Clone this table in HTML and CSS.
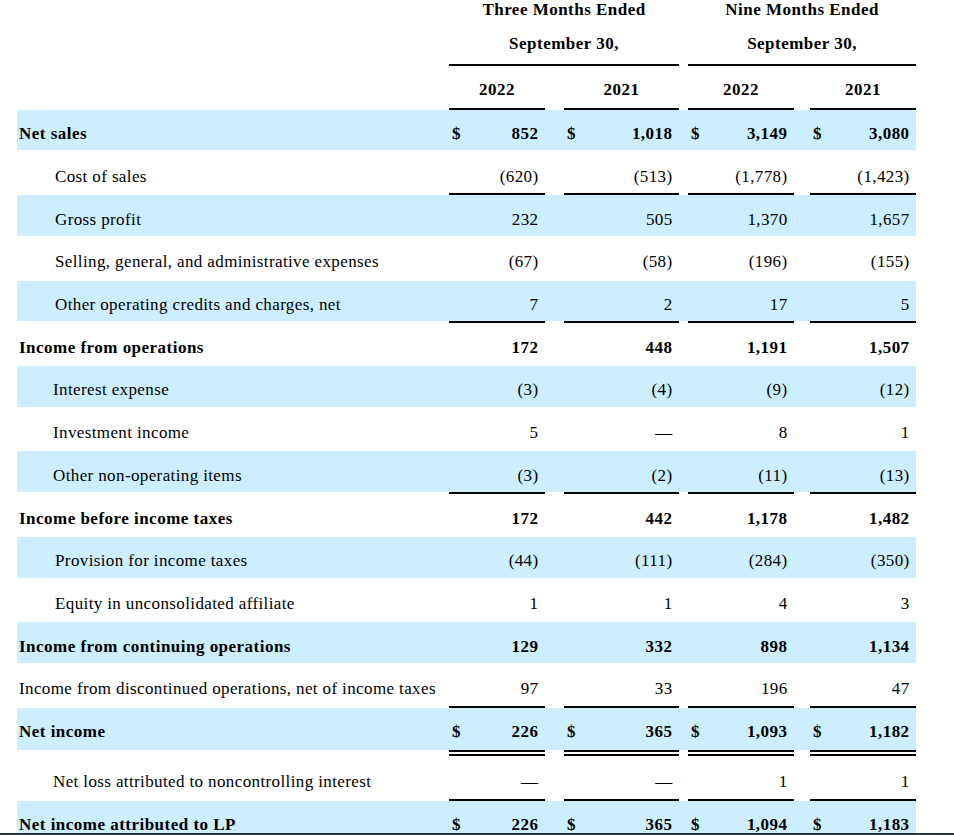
FILE: index.html
```html
<!DOCTYPE html>
<html lang="en">
<head>
<meta charset="utf-8">
<title>Statement of Income</title>
<link rel="stylesheet" href="styles.css">
</head>
<body>
<div class="wrap">
<table class="fin">
  <colgroup>
    <col class="c-lbl">
    <col class="c-d"><col class="c-n1"><col class="c-s1">
    <col class="c-d"><col class="c-n2"><col class="c-s2">
    <col class="c-d"><col class="c-n3"><col class="c-s3">
    <col class="c-d"><col class="c-n4">
  </colgroup>
  <tbody>
    <tr class="h1">
      <td></td>
      <td class="hc" colspan="5">Three Months Ended</td>
      <td></td>
      <td class="hc" colspan="5">Nine Months Ended</td>
    </tr>
    <tr class="h2">
      <td></td>
      <td class="hc" colspan="5">September 30,</td>
      <td></td>
      <td class="hc" colspan="5">September 30,</td>
    </tr>
    <tr class="h3">
      <td></td>
      <td class="hc ul" colspan="2">2022</td>
      <td class="ul"></td>
      <td class="hc ul" colspan="2">2021</td>
      <td></td>
      <td class="hc ul" colspan="2">2022</td>
      <td class="ul"></td>
      <td class="hc ul" colspan="2">2021</td>
    </tr>

    <tr class="blue t b">
      <td class="lbl">Net sales</td>
      <td class="d">$</td><td class="n">852</td><td></td>
      <td class="d">$</td><td class="n">1,018</td><td></td>
      <td class="d">$</td><td class="n">3,149</td><td></td>
      <td class="d">$</td><td class="n">3,080</td>
    </tr>
    <tr>
      <td class="in1">Cost of sales</td>
      <td class="d"></td><td class="n">(620)</td><td></td>
      <td class="d"></td><td class="n">(513)</td><td></td>
      <td class="d"></td><td class="n">(1,778)</td><td></td>
      <td class="d"></td><td class="n">(1,423)</td>
    </tr>
    <tr class="blue t">
      <td class="in1">Gross profit</td>
      <td class="d"></td><td class="n">232</td><td></td>
      <td class="d"></td><td class="n">505</td><td></td>
      <td class="d"></td><td class="n">1,370</td><td></td>
      <td class="d"></td><td class="n">1,657</td>
    </tr>
    <tr>
      <td class="in1">Selling, general, and administrative expenses</td>
      <td class="d"></td><td class="n">(67)</td><td></td>
      <td class="d"></td><td class="n">(58)</td><td></td>
      <td class="d"></td><td class="n">(196)</td><td></td>
      <td class="d"></td><td class="n">(155)</td>
    </tr>
    <tr class="blue">
      <td class="in1">Other operating credits and charges, net</td>
      <td class="d"></td><td class="n">7</td><td></td>
      <td class="d"></td><td class="n">2</td><td></td>
      <td class="d"></td><td class="n">17</td><td></td>
      <td class="d"></td><td class="n">5</td>
    </tr>
    <tr class="t b">
      <td class="lbl">Income from operations</td>
      <td class="d"></td><td class="n">172</td><td></td>
      <td class="d"></td><td class="n">448</td><td></td>
      <td class="d"></td><td class="n">1,191</td><td></td>
      <td class="d"></td><td class="n">1,507</td>
    </tr>
    <tr class="blue">
      <td class="in2">Interest expense</td>
      <td class="d"></td><td class="n">(3)</td><td></td>
      <td class="d"></td><td class="n">(4)</td><td></td>
      <td class="d"></td><td class="n">(9)</td><td></td>
      <td class="d"></td><td class="n">(12)</td>
    </tr>
    <tr>
      <td class="in2">Investment income</td>
      <td class="d"></td><td class="n">5</td><td></td>
      <td class="d"></td><td class="n">—</td><td></td>
      <td class="d"></td><td class="n">8</td><td></td>
      <td class="d"></td><td class="n">1</td>
    </tr>
    <tr class="blue">
      <td class="in2">Other non-operating items</td>
      <td class="d"></td><td class="n">(3)</td><td></td>
      <td class="d"></td><td class="n">(2)</td><td></td>
      <td class="d"></td><td class="n">(11)</td><td></td>
      <td class="d"></td><td class="n">(13)</td>
    </tr>
    <tr class="t b">
      <td class="lbl">Income before income taxes</td>
      <td class="d"></td><td class="n">172</td><td></td>
      <td class="d"></td><td class="n">442</td><td></td>
      <td class="d"></td><td class="n">1,178</td><td></td>
      <td class="d"></td><td class="n">1,482</td>
    </tr>
    <tr class="blue">
      <td class="in1">Provision for income taxes</td>
      <td class="d"></td><td class="n">(44)</td><td></td>
      <td class="d"></td><td class="n">(111)</td><td></td>
      <td class="d"></td><td class="n">(284)</td><td></td>
      <td class="d"></td><td class="n">(350)</td>
    </tr>
    <tr>
      <td class="in1">Equity in unconsolidated affiliate</td>
      <td class="d"></td><td class="n">1</td><td></td>
      <td class="d"></td><td class="n">1</td><td></td>
      <td class="d"></td><td class="n">4</td><td></td>
      <td class="d"></td><td class="n">3</td>
    </tr>
    <tr class="blue b">
      <td class="lbl">Income from continuing operations</td>
      <td class="d"></td><td class="n">129</td><td></td>
      <td class="d"></td><td class="n">332</td><td></td>
      <td class="d"></td><td class="n">898</td><td></td>
      <td class="d"></td><td class="n">1,134</td>
    </tr>
    <tr>
      <td class="lbl">Income from discontinued operations, net of income taxes</td>
      <td class="d"></td><td class="n">97</td><td></td>
      <td class="d"></td><td class="n">33</td><td></td>
      <td class="d"></td><td class="n">196</td><td></td>
      <td class="d"></td><td class="n">47</td>
    </tr>
    <tr class="blue t b ni">
      <td class="lbl">Net income</td>
      <td class="d">$</td><td class="n">226</td><td></td>
      <td class="d">$</td><td class="n">365</td><td></td>
      <td class="d">$</td><td class="n">1,093</td><td></td>
      <td class="d">$</td><td class="n">1,182</td>
    </tr>
    <tr>
      <td class="in2">Net loss attributed to noncontrolling interest</td>
      <td class="d"></td><td class="n">—</td><td></td>
      <td class="d"></td><td class="n">—</td><td></td>
      <td class="d"></td><td class="n">1</td><td></td>
      <td class="d"></td><td class="n">1</td>
    </tr>
    <tr class="blue t b">
      <td class="lbl">Net income attributed to LP</td>
      <td class="d">$</td><td class="n">226</td><td></td>
      <td class="d">$</td><td class="n">365</td><td></td>
      <td class="d">$</td><td class="n">1,094</td><td></td>
      <td class="d">$</td><td class="n">1,183</td>
    </tr>
  </tbody>
</table>
</div>
<div class="edge"></div>
</body>
</html>
```
FILE: styles.css
```css
html {
  overflow: hidden;
}
body {
  margin: 0;
  background: #ffffff;
  color: #000000;
  font-family: "Liberation Serif", "Times New Roman", serif;
  font-size: 17px;
  letter-spacing: 0.38px;
}
.wrap {
  padding-left: 17px;
}
.fin {
  border-collapse: separate;
  border-spacing: 0;
  table-layout: fixed;
  width: 899px;
}
.c-lbl { width: 432px; }
.c-d { width: 20px; }
.c-n1 { width: 76px; }
.c-s1 { width: 19px; }
.c-n2 { width: 95px; }
.c-s2 { width: 9px; }
.c-n3 { width: 86px; }
.c-s3 { width: 16px; }
.c-n4 { width: 86px; }

.fin td {
  padding: 15.45px 0 7.29px 0;
  line-height: 18px;
  border-top: 2px solid transparent;
  background-clip: padding-box;
  white-space: nowrap;
  vertical-align: top;
}
.fin .blue td {
  background-color: #cceeff;
}
.fin .b td {
  font-weight: bold;
  letter-spacing: 0.48px;
}
.fin td.lbl { padding-left: 2px; }
.fin td.in1 { padding-left: 38px; }
.fin td.in2 { padding-left: 36px; }
.fin td.d { padding-left: 3px; }
.fin td.n {
  text-align: right;
  padding-right: 6.5px;
}
.fin .t td.d,
.fin .t td.n {
  border-top-color: #000000;
}
.fin .ni td {
  padding-bottom: 8.85px;
  border-bottom: 6px double transparent;
}
.fin .ni td.d,
.fin .ni td.n {
  border-bottom-color: #000000;
}

.fin .h1 td {
  padding: 0.95px 0 1.05px 0;
  border-top: 0;
}
.fin .h2 td {
  padding: 15.45px 0 10.55px 0;
  border-top: 0;
}
.fin .h3 td {
  padding-bottom: 8.25px;
}
.fin td.hc {
  text-align: center;
  font-weight: bold;
  letter-spacing: 0.48px;
}
.fin .h3 td.ul {
  border-top-color: #000000;
}

.edge {
  position: fixed;
  left: 0;
  right: 0;
  bottom: 0;
  height: 2px;
  background: #26343f;
}
```
